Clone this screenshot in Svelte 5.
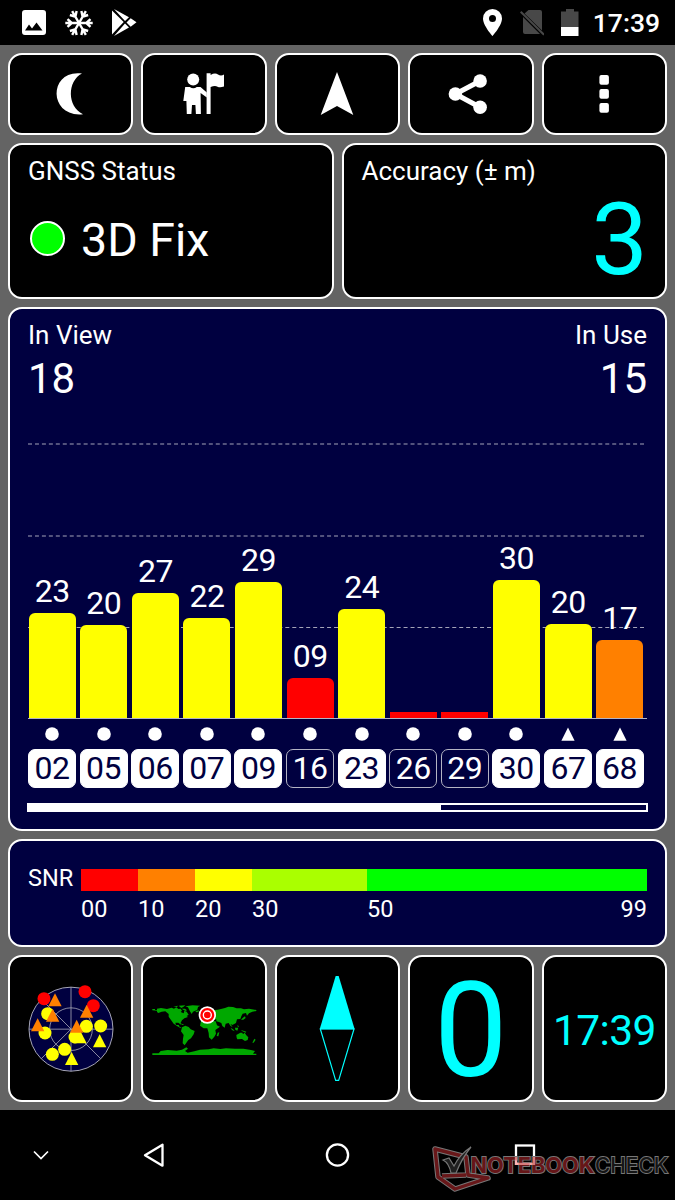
<script lang="ts">
  type Satellite = { id: string; snr: number; height: number; inUse: boolean; glonass?: boolean };

  const satellites: Satellite[] = [
    { id: '02', snr: 23, height: 105.5, inUse: true },
    { id: '05', snr: 20, height: 93, inUse: true },
    { id: '06', snr: 27, height: 125, inUse: true },
    { id: '07', snr: 22, height: 100.5, inUse: true },
    { id: '09', snr: 29, height: 136, inUse: true },
    { id: '16', snr: 9, height: 40.5, inUse: false },
    { id: '23', snr: 24, height: 109.5, inUse: true },
    { id: '26', snr: 0, height: 6.5, inUse: false },
    { id: '29', snr: 0, height: 6.5, inUse: false },
    { id: '30', snr: 30, height: 138, inUse: true },
    { id: '67', snr: 20, height: 94, inUse: true, glonass: true },
    { id: '68', snr: 17, height: 78.5, inUse: true, glonass: true },
  ];

  const scale = [
    { label: '00', color: '#ff0000', span: 57 },
    { label: '10', color: '#ff8000', span: 57 },
    { label: '20', color: '#ffff00', span: 57 },
    { label: '30', color: '#aaff00', span: 115 },
    { label: '50', color: '#00ff00', span: 280 },
  ];

  const pad = (n: number) => String(n).padStart(2, '0');

  function barColor(snr: number) {
    if (snr < 10) return '#ff0000';
    if (snr < 20) return '#ff8000';
    return '#ffff00';
  }

  // sky plot markers
  const dots = [
    [101, 130, '#f00'], [224, 109, '#f00'], [249, 151, '#f00'],
    [112, 175, '#ff0'], [104, 233, '#ff0'], [228, 213, '#ff0'], [271, 212, '#ff0'],
    [194, 245, '#ff0'], [163, 282, '#ff0'], [126, 297, '#ff0'],
  ];
  const triangles = [
    [134, 134, '#ff8000'], [127, 180, '#ff8000'], [82, 209, '#ff8000'], [229, 168, '#ff8000'],
    [209, 245, '#ff0'], [199, 213, '#ff8000'], [268, 257, '#ff0'], [184, 310, '#ff0'],
  ];
</script>

<div class="screen">
  <header class="status-bar">
    <div class="notes">
      <svg width="24" height="25" viewBox="0 0 24 25"><path fill="#fff" fill-rule="evenodd" d="M3 0H21Q24 0 24 3V22Q24 25 21 25H3Q0 25 0 22V3Q0 0 3 0ZM3 20.5H20.5L14.5 12.5L10 18.5L7 14.5Z" /></svg>
      <svg class="snow" width="28" height="28" viewBox="-14 -14 28 28">
        {#each [30, 90, 150, 210, 270, 330] as angle}
          <path transform="rotate({angle})" fill="none" stroke="#fff" stroke-width="2.4" d="M0 0V-13.7M-3.9 -11.5L0 -7.2L3.9 -11.5" />
        {/each}
      </svg>
      <svg width="25" height="27" viewBox="0 0 25 27"><path fill="#fff" d="M0 1.5L11.7 13L0 25.5ZM2 0L17 8.2L13 12ZM2 27L13 14.5L17 18.5ZM14.5 13.4L18.7 9.2L24.5 13.2L18.7 17.7Z" /></svg>
    </div>
    <div class="system">
      <svg width="19" height="27" viewBox="0 0 19 27"><path fill="#fff" fill-rule="evenodd" d="M9.5 0A9.5 9.5 0 0 1 19 9.5C19 16.5 9.5 27 9.5 27S0 16.5 0 9.5A9.5 9.5 0 0 1 9.5 0ZM9.5 6A3.5 3.5 0 1 0 9.5 13A3.5 3.5 0 1 0 9.5 6Z" /></svg>
      <svg class="sim" width="24" height="27" viewBox="0 0 24 27"><path fill="#484848" d="M8.5 1H20Q22 1 22 3V21.5L4.5 4.5ZM3 8L20 25H5Q3 25 3 23Z" /><path stroke="#484848" stroke-width="2" d="M.7 2.7L24 25.7" /></svg>
      <svg class="battery" width="18" height="27" viewBox="0 0 18 27"><path fill="#484848" d="M5 0H13V2.5H17.5V18H0V2.5H5Z" /><path fill="#fff" d="M0 18H17.5V27H0Z" /></svg>
      <span class="time">17:39</span>
    </div>
  </header>

  <main class="dashboard">
    <div class="row five">
      <button class="card tool" aria-label="Night mode"><svg width="64" height="64"><path fill="#fff" d="M43 11.6C9 7 9 56 44 52.2C28 45 28 19 43 11.6Z" /></svg></button>
      <button class="card tool" aria-label="Waypoint">
        <svg width="64" height="64" fill="#fff">
          <circle cx="21.2" cy="17.5" r="6" />
          <path d="M13.2 25H17.8Q21.3 27.5 24.8 25H28.5L34.8 30.5V35.5L28.6 31L28.9 52H23.9L23.4 43H20L19.4 52H14.8L14.4 39H11.3Z" />
          <path d="M34.6 11.3H38.6V13Q43 10.5 46 12.5T52 12.5V24.5Q48 26 45.5 24.7T38.6 25V52H34.6Z" />
        </svg>
      </button>
      <button class="card tool" aria-label="Navigate"><svg width="64" height="64"><path fill="#fff" d="M32 10L48.3 53L32 44L15.7 53Z" /></svg></button>
      <button class="card tool" aria-label="Share">
        <svg width="64" height="64" fill="#fff"><path fill="none" stroke="#fff" stroke-width="5" d="M41.1 19L16.4 32L41.1 45.3" /><circle cx="16.4" cy="32" r="6.8" /><circle cx="41.1" cy="19" r="6.8" /><circle cx="41.1" cy="45.3" r="6.8" /></svg>
      </button>
      <button class="card tool" aria-label="Menu">
        <svg width="64" height="64" fill="#fff"><rect x="27.4" y="13" width="9.5" height="9.8" rx="2" /><rect x="27.4" y="27" width="9.5" height="9.8" rx="2" /><rect x="27.4" y="41" width="9.5" height="9.8" rx="2" /></svg>
      </button>
    </div>

    <div class="row two">
      <section class="card info">
        <div class="label">GNSS Status</div>
        <div class="fix"><span class="led"></span>3D Fix</div>
      </section>
      <section class="card info">
        <div class="label">Accuracy (± m)</div>
        <div class="accuracy">3</div>
      </section>
    </div>

    <section class="card signal">
      <div class="counts">
        <div><div class="label">In View</div><div class="count">18</div></div>
        <div class="right"><div class="label">In Use</div><div class="count">15</div></div>
      </div>
      <div class="plot">
        <svg class="grid" width="620" height="319"><path stroke="#a4a4b8" stroke-width="1.2" stroke-dasharray="4 2.955" d="M0 44H616M0 136H616M0 227.5H616" /></svg>
        {#each satellites as sat}
          <div class="col">
            {#if sat.snr > 0}<span class="snr">{pad(sat.snr)}</span>{/if}
            <div class="bar" class:flat={sat.snr === 0} style={`height:${sat.height}px;background:${barColor(sat.snr)}`}></div>
          </div>
        {/each}
      </div>
      <div class="ids">
        {#each satellites as sat}
          <div class="sat">
            <svg width="14" height="14">
              {#if sat.glonass}<path fill="#fff" d="M7 .5L13.6 13.7H.4Z" />{:else}<circle cx="7" cy="7" r="6.8" fill="#fff" />{/if}
            </svg>
            <div class="chip" class:unused={!sat.inUse}>{sat.id}</div>
          </div>
        {/each}
      </div>
      <div class="scroll"><div class="thumb"></div></div>
    </section>

    <section class="card legend">
      <span class="legend-title">SNR</span>
      <div class="scale">
        {#each scale as step}
          <div class="step" style={`flex-grow:${step.span}`}>
            <div class="swatch" style={`background:${step.color}`}></div>
            <div class="ticks"><span>{step.label}</span>{#if step.label === '50'}<span>99</span>{/if}</div>
          </div>
        {/each}
      </div>
    </section>

    <div class="row five">
      <section class="card tile">
        <svg width="88" height="88" viewBox="50 89 264 264">
          <circle cx="182" cy="221.5" r="126" fill="#000040" stroke="#a5a5b5" stroke-width="3" />
          <g fill="none" stroke="#a5a5b5" stroke-width="2.5"><circle cx="182" cy="221.5" r="64" /><path d="M182 95V348M56 221.5H308M93 132L271 310M182 221.5L93 310" /></g>
          {#each dots as [x, y, color]}<circle cx={x} cy={y} r="19.5" fill={color} />{/each}
          {#each triangles as [x, y, color]}<path transform="translate({x} {y})" fill={color} d="M0 -20L20 19H-20Z" />{/each}
        </svg>
      </section>
      <section class="card tile">
        <svg width="106.667" height="53.333" viewBox="32 140 320 160">
          <g fill="#00a800">
            <path d="M36 161H44V164H50V160L62 158L80 161L94 157L101 160L108 156L114 161L121 160L125 166L121 170L130 174L132 166L139 169L145 178L139 182L143 185L132 189L125 195L121 202L122 208L114 202L105 202L107 209L115 209L118 215L124 217L120 218L110 212L100 205L92 194L85 184L85 176L75 168L64 169L54 173L50 170V166L36 165Z" />
            <path d="M99 154L112 151L111 155ZM115 151L135 150L130 154L123 158ZM124 160L134 160L140 165L135 167ZM118 203L132 208L126 209Z" />
            <path d="M135 153L157 150L180 151L173 155L171 163L158 169L154 176L148 166L143 156ZM165 167L176 165L174 170L168 171Z" />
            <path d="M125 216L135 211L145 215L151 222L163 227L160 237L152 249L144 254L136 265L133 270L127 264L128 250L130 239L122 228Z" />
            <path d="M178 190L182 180L188 176L184 170L192 173L196 168L203 163L212 159L222 164L232 163L242 161L254 158L264 154L278 155L289 159L302 159L311 162L326 160L348 164V167L336 169L326 174L320 181L317 173L307 175L303 183L300 191L290 192L287 203L276 209L270 205L277 216L270 211L265 203L256 205L253 217L246 212L243 203L236 200L228 198L228 192L217 193L214 188L208 190L203 183L196 184L191 191Z" />
            <path d="M182 198L193 193L204 193L216 197L226 198L230 210L239 214L225 224L227 235L222 244L214 253L206 246L205 233L201 219L190 219L179 211Z" />
            <path d="M232 232L237 231L234 243L229 242ZM302 193L307 188L314 183L316 188L309 193ZM291 209L296 213L293 216ZM271 217L280 223L283 228L275 224ZM284 217L294 217L291 226L285 223ZM302 224L318 229L316 232L305 227ZM288 239L300 232L306 232L308 237L313 232L318 240L324 246L322 254L314 257L305 251L291 252L289 247ZM342 250L346 253L340 262L336 262Z" />
            <path d="M36 294H55L61 287L82 284L109 286L125 283L138 276L143 280L134 287L142 292L162 288L179 283L205 282L220 279L240 281L257 279L284 280L309 280L332 284L344 287L338 295H348V300H36Z" />
          </g>
          <circle cx="201" cy="179" r="26" fill="#fff" /><circle cx="201" cy="179" r="21" fill="#f00" /><circle cx="201" cy="179" r="12" fill="#f00" stroke="#fff" stroke-width="4" />
        </svg>
      </section>
      <section class="card tile">
        <svg width="40" height="110.667" viewBox="142 70 120 332"><path fill="#0ff" d="M198 79H207L255 239H150Z" /><path fill="none" stroke="#0ff" stroke-width="3.5" d="M152 238L198 392H207L253 238Z" /></svg>
      </section>
      <section class="card tile"><span class="speed">0</span></section>
      <section class="card tile"><span class="clock">17:39</span></section>
    </div>
  </main>

  <nav class="nav-bar">
    <svg width="18" height="12"><path fill="none" stroke="#fff" stroke-width="1.7" d="M2 2.5L9 9.5L16 2.5" /></svg>
    <svg width="22" height="26"><path fill="none" stroke="#fff" stroke-width="2.3" stroke-linejoin="round" d="M19.5 2.7V23.7L2 13.2Z" /></svg>
    <svg width="26" height="26"><circle cx="12.5" cy="13" r="10.6" fill="none" stroke="#fff" stroke-width="2.3" /></svg>
    <svg width="22" height="22"><rect x="2" y="1.5" width="18" height="18.3" fill="none" stroke="#fff" stroke-width="2.3" /></svg>
    <svg class="brand" width="245" height="54" viewBox="430 1140 245 54">
      <g fill="none" stroke-linejoin="round">
        <path stroke="#777" stroke-width="5.5" d="M466 1157L435 1149L438 1177L455 1189L488 1178L468 1175ZM442 1176L466 1175" />
        <path stroke="#681719" stroke-width="3.4" d="M466 1157L435 1149L438 1177L455 1189L488 1178L468 1175ZM442 1176L466 1175" />
      </g>
      <path fill="#202020" stroke="#777" stroke-width="1.2" d="M443 1160L449 1158L454 1166Q460 1154 471 1147Q462 1158 456 1173H451Q449 1163 443 1160Z" />
      <g class="brand-text">
        <text x="470.5" y="1172.5" textLength="124" lengthAdjust="spacingAndGlyphs" fill="#661618" font-weight="700">NOTEBOOK</text>
        <text x="595" y="1172.5" textLength="73" lengthAdjust="spacingAndGlyphs" fill="#151515" font-weight="500">CHECK</text>
      </g>
      <path fill="none" stroke="#ff9c9c" stroke-opacity=".75" stroke-width="2.3" d="M516 1157V1163.8H534V1157" />
    </svg>
  </nav>
</div>

<style>
  :global(body) { margin: 0; background: #000; }
  .screen { width: 675px; height: 1200px; overflow: hidden; background: #646464; color: #fff; font-family: Roboto, sans-serif; }
  svg { display: block; flex: none; }

  .status-bar { height: 45px; box-sizing: border-box; padding: 0 15px 0 22px; display: flex; justify-content: space-between; align-items: center; background: #000; }
  .notes, .system { display: flex; align-items: center; }
  .snow { margin: 0 19px; }
  .sim { margin-left: 18px; }
  .battery { margin: 0 14px 0 17px; }
  .time { font-size: 26.5px; font-weight: 500; line-height: 45px; }

  .dashboard { height: 1065px; box-sizing: border-box; padding: 8px; display: grid; grid-template-rows: 82px 156px 524px 108px 147px; gap: 8px; }
  .row { display: grid; gap: 8px; }
  .five { grid-template-columns: repeat(5, 1fr); }
  .two { grid-template-columns: repeat(2, 1fr); }
  .card { box-sizing: border-box; min-width: 0; border: 2px solid #fff; border-radius: 14px; background: #000; color: inherit; font-family: inherit; }
  .tool, .tile { padding: 0; display: flex; align-items: center; justify-content: center; }

  .info { padding: 12px 17px 0 18px; }
  .label { font-size: 26px; line-height: 28px; margin-bottom: 2px; }
  .fix { display: flex; align-items: center; gap: 16px; margin-top: 25px; padding-left: 2px; font-size: 46.5px; line-height: 56px; }
  .led { width: 31px; height: 31px; margin-top: -4px; border: 2px solid #fff; border-radius: 50%; background: #0f0; }
  .info .label { margin-bottom: 0; padding-bottom: 2px; }
  .accuracy { color: #0ff; font-size: 101px; line-height: 100px; text-align: right; margin-top: 3px; }

  .signal { background: #000040; padding: 12px 18px 0; }
  .counts { display: flex; justify-content: space-between; height: 79px; }
  .right { text-align: right; }
  .count { font-size: 42px; line-height: 50px; margin-top: 3px; }
  .signal .label { margin-bottom: 0; padding-bottom: 2px; }
  .plot { position: relative; height: 318px; display: flex; align-items: flex-end; gap: 4.6px; padding-left: .7px; border-bottom: 1px solid #b4b4c4; }
  .grid { position: absolute; left: 0; top: 0; }
  .col { position: relative; width: 47px; text-align: center; }
  .snr { display: block; font-size: 32px; line-height: 38px; margin-bottom: 3px; letter-spacing: -.5px; }
  .bar { border-radius: 6px 6px 0 0; }
  .flat { border-radius: 0; }
  .ids { display: flex; gap: 3.6px; margin-top: 8px; }
  .sat { width: 48px; display: flex; flex-direction: column; align-items: center; gap: 8px; }
  .chip { box-sizing: border-box; width: 48px; height: 39px; border: 1px solid #fff; border-radius: 7px; background: #fff; color: #000040; font-size: 32px; line-height: 37px; text-align: center; letter-spacing: -.5px; }
  .unused { background: transparent; color: #fff; border-color: #b4b4c4; }
  .scroll { box-sizing: border-box; height: 9px; margin: 15px -1px 0; border: 2px solid #fff; }
  .thumb { width: 66.8%; height: 100%; background: #fff; }

  .legend { background: #000040; display: flex; align-items: flex-start; gap: 9px; padding: 28px 18px 0; font-size: 23.5px; }
  .legend-title { width: 44px; line-height: 19px; }
  .scale { flex: 1; display: flex; }
  .step { flex: 0 0 0; min-width: 0; }
  .swatch { height: 22px; }
  .ticks { display: flex; justify-content: space-between; line-height: 28px; margin-top: 4px; }

  .speed { color: #0ff; font-size: 131px; line-height: 130px; padding-top: 5px; }
  .clock { color: #0ff; font-size: 42.5px; line-height: 50px; padding-top: 4px; letter-spacing: -.6px; }

  .nav-bar { position: relative; height: 90px; display: grid; grid-template-columns: 82px 144px 223px 152px; align-items: center; justify-items: center; background: #000; }
  .brand { position: absolute; left: 430px; top: 30px; }
  .brand-text { font-family: Inter, sans-serif; font-size: 22px; stroke: #777; stroke-width: 1.8; paint-order: stroke; }
</style>
